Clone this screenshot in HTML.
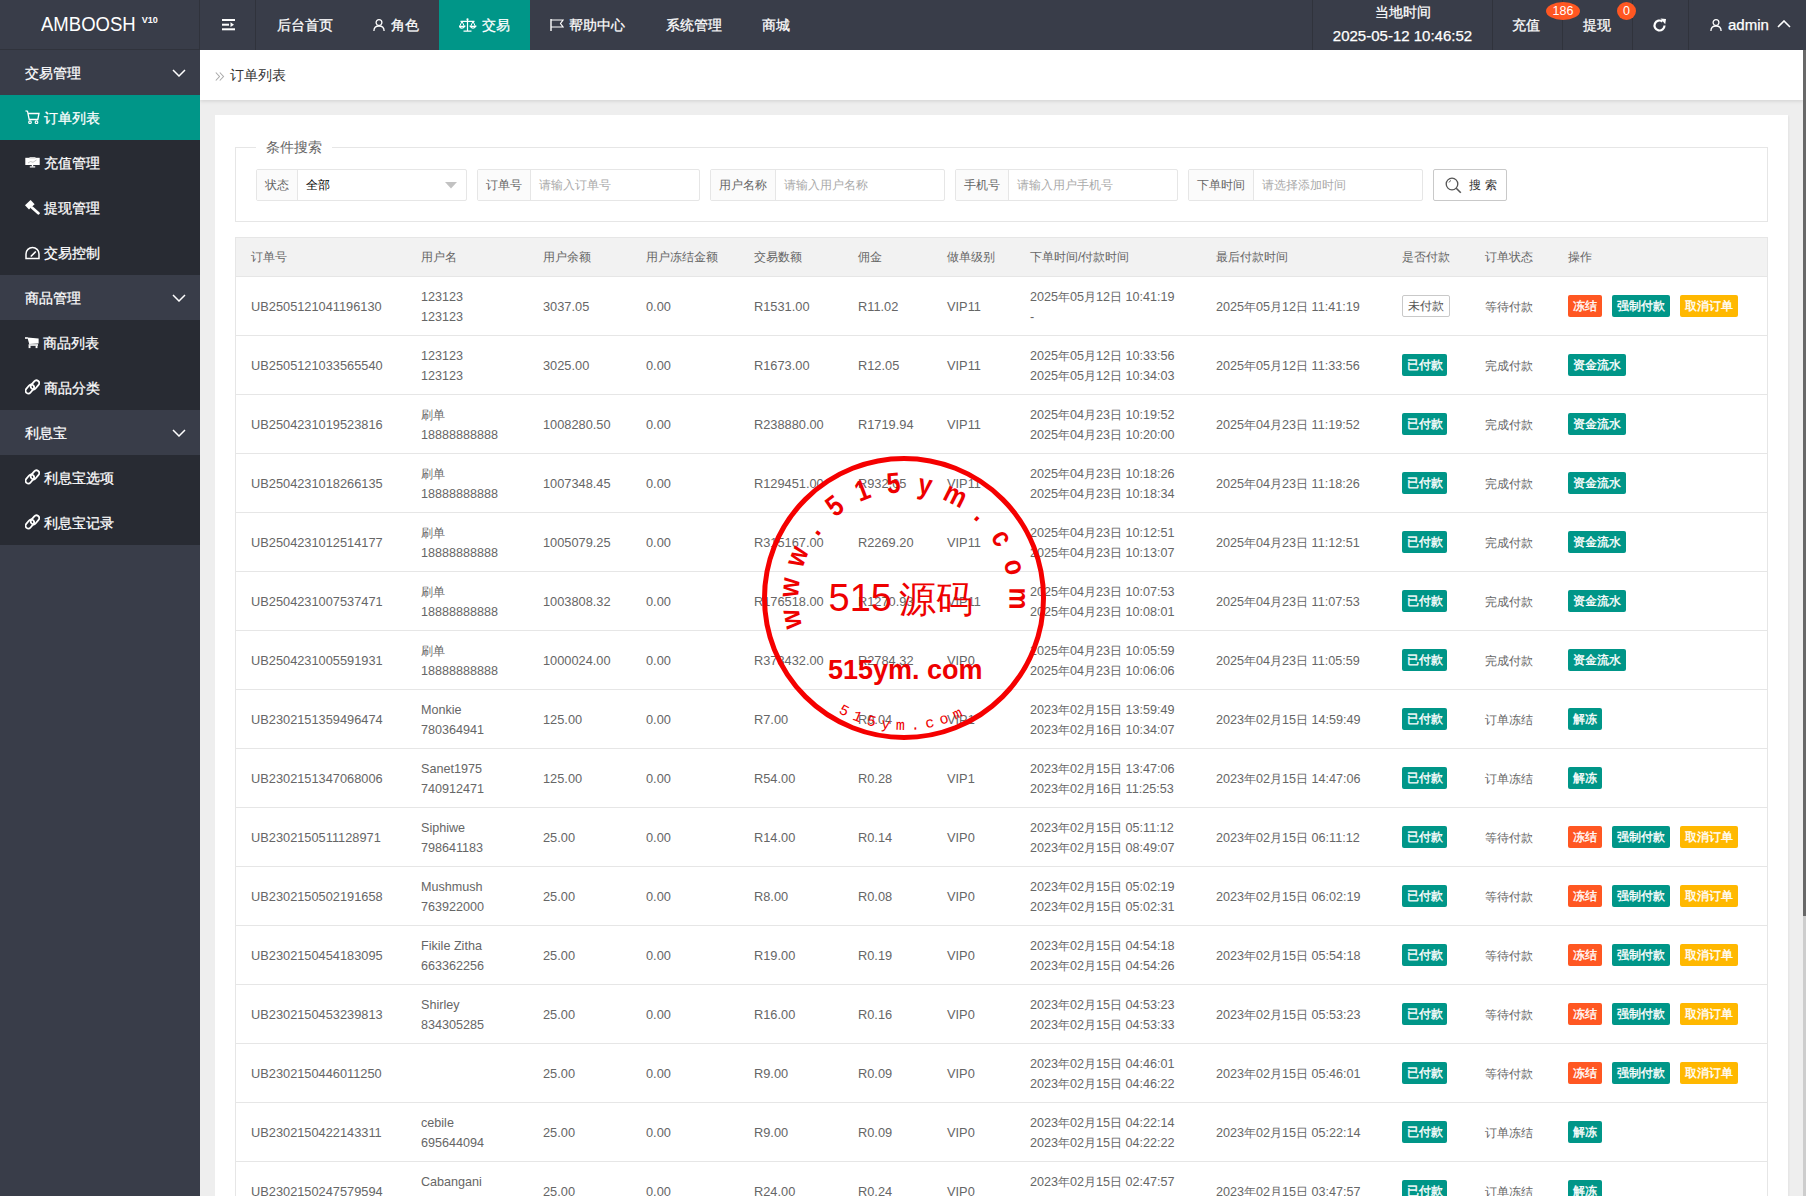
<!DOCTYPE html>
<html><head><meta charset="utf-8">
<style>
*{margin:0;padding:0;box-sizing:border-box}
html,body{width:1806px;height:1196px;overflow:hidden;background:#eee;font-family:"Liberation Sans",sans-serif;color:#666;font-size:12px}
.hdr{position:absolute;left:0;top:0;width:1806px;height:50px;background:#393D49;color:#fff;font-size:14px}
.logo{position:absolute;left:0;top:0;width:200px;height:50px;border-right:1px solid #30333c;border-bottom:1px solid #30333c}
.logo .t{position:absolute;left:41px;top:13px;font-size:19.5px;color:#fff;line-height:22px;transform:scaleX(0.95);transform-origin:0 0;white-space:nowrap}
.logo sup{font-size:9.5px;font-weight:bold;position:absolute;left:106px;top:-4px}
.hamb{position:absolute;left:200px;top:0;width:56px;height:50px;border-right:1px solid #30333c}
.nav{position:absolute;top:0;height:50px;line-height:50px;color:#fff;font-size:14px;white-space:nowrap;-webkit-text-stroke:0.25px #fff}
.nav svg{position:absolute;top:17px}
.navact{background:#009688}
.sep{position:absolute;top:0;width:1px;height:50px;background:#30333c}
.badge{position:absolute;z-index:5;height:18px;line-height:18px;border-radius:50%;background:#FF5722;color:#fff;font-size:12px;text-align:center}
.side{position:absolute;left:0;top:50px;width:200px;height:1146px;background:#393D49}
.side .it{position:absolute;left:0;width:200px;height:45px;line-height:46px;color:#fff;font-size:14px;padding-left:25px;white-space:nowrap;-webkit-text-stroke:0.25px #fff}
.side .ch{background:#282B33;padding-left:44px}
.side .act{background:#009688}
.side .it svg{position:absolute;left:25px;top:15px}
.side .it .arr{position:absolute;left:172px;top:19px}
.main{position:absolute;left:200px;top:50px;width:1603px;height:1146px;background:#eee;overflow:hidden}
.crumb{position:absolute;left:0;top:0;width:1603px;height:50px;background:#fff;box-shadow:0 1px 4px rgba(0,0,0,.13)}
.crumb .t{position:absolute;left:30px;top:17px;font-size:14px;color:#333;line-height:16px}
.crumb .gt{position:absolute;left:14px;top:17px;font-size:14px;color:#999;line-height:16px}
.card{position:absolute;left:15px;top:65px;width:1573px;height:1200px;background:#fff;box-shadow:1px 1px 2px rgba(0,0,0,.05)}
.fs{position:absolute;left:20px;top:32px;width:1533px;height:75px;border:1px solid #e6e6e6}
.lg{position:absolute;left:20px;top:-10px;padding:0 10px;background:#fff;font-size:14px;line-height:18px;color:#666}
.ig{position:absolute;top:21px;height:32px;border:1px solid #e6e6e6;border-radius:2px;background:#fff}
.ig .lb{position:absolute;left:0;top:0;height:30px;line-height:30px;background:#FBFBFB;border-right:1px solid #e6e6e6;padding:0 8px;color:#666;font-size:12px}
.ig .ph{position:absolute;top:0;height:30px;line-height:30px;color:#aaa;font-size:12px}
.sbtn{position:absolute;top:21px;height:32px;width:74px;border:1px solid #C9C9C9;border-radius:2px;background:#fff;color:#333;font-size:12px;line-height:30px}
.tbl{position:absolute;left:20px;top:122px;width:1533px;height:1100px;border-left:1px solid #e6e6e6;border-right:1px solid #e6e6e6;border-top:1px solid #e6e6e6}
.th{position:absolute;left:0;width:1531px;height:39px;background:#F2F2F2;border-bottom:1px solid #e6e6e6}
.th .c{position:absolute;top:0;line-height:39px;color:#666;font-size:12px;white-space:nowrap}
.tr{position:absolute;left:0;width:1531px;height:59px;border-bottom:1px solid #e6e6e6}
.tr .c{position:absolute;top:1px;height:58px;line-height:58px;white-space:nowrap;color:#666;font-size:12.8px}
.tr .c.b{top:-1px}
.cj{font-style:normal;font-size:12px}
.dt{font-size:12.6px}
.l2{position:absolute;top:9px;line-height:20px;white-space:nowrap}
.l2 span{display:block}
.tag{display:inline-block;vertical-align:middle;height:22px;line-height:20px;width:48px;text-align:center;border:1px solid #C9C9C9;border-radius:2px;color:#555;font-size:12px;background:#fff}
.btn{display:inline-block;vertical-align:middle;height:22px;line-height:23px;width:58px;text-align:center;border-radius:2px;color:#fff;font-size:12px;-webkit-text-stroke:0.35px #fff}
.ops .btn{margin-right:10px}
.btn,.tag{position:relative;top:0}
.g{background:#009688}.o{background:#FF5722}.y{background:#FFB800}
.sb{position:absolute;left:1803px;top:50px;width:3px;height:1146px;background:#cdcdcd}
.sb i{position:absolute;left:0;top:0;width:3px;height:866px;background:#686868}
.stamp{position:absolute;left:0;top:0}
</style></head><body>
<div class="hdr">
  <div class="logo"><div class="t">AMBOOSH<sup>V10</sup></div></div>
  <div class="hamb">
    <svg style="position:absolute;left:22px;top:19px" width="14" height="12" viewBox="0 0 14 12"><rect x="0" y="0" width="13" height="2" fill="#fff"/><rect x="0" y="4.7" width="7" height="2" fill="#fff"/><rect x="0" y="9.3" width="13" height="2" fill="#fff"/><path d="M8.5 3.3 L12 5.7 L8.5 8.1 Z" fill="#fff"/></svg>
  </div>
  <div class="nav" style="left:256px;width:97px;text-align:center">后台首页</div>
  <div class="nav" style="left:353px;width:86px">
    <svg style="left:20px;top:19px" width="12" height="12" viewBox="0 0 12 12"><circle cx="6" cy="3.6" r="2.9" fill="none" stroke="#fff" stroke-width="1.3"/><path d="M0.9 12 C0.9 8.6 3 7 6 7 C9 7 11.1 8.6 11.1 12" fill="none" stroke="#fff" stroke-width="1.3"/></svg>
    <span style="position:absolute;left:38px">角色</span></div>
  <div class="nav navact" style="left:439px;width:91px">
    <svg style="left:20px;top:18px" width="18" height="14" viewBox="0 0 18 14"><circle cx="8.5" cy="1.3" r="1.1" fill="#fff"/><path d="M8.5 2 V12.6 M4.5 13.2 H12.5 M1.5 3.3 H15.5" fill="none" stroke="#fff" stroke-width="1.2"/><path d="M3 3.3 L0.6 8.5 M3 3.3 L5.4 8.5 M14 3.3 L11.6 8.5 M14 3.3 L16.4 8.5" fill="none" stroke="#fff" stroke-width="1"/><path d="M0.3 8.3 Q3 12 5.7 8.3 Z M11.3 8.3 Q14 12 16.7 8.3 Z" fill="none" stroke="#fff" stroke-width="1.2"/></svg>
    <span style="position:absolute;left:43px">交易</span></div>
  <div class="nav" style="left:530px;width:115px">
    <svg style="left:20px;top:19px" width="14" height="12" viewBox="0 0 14 12"><path d="M1 0 V12" stroke="#fff" stroke-width="1.4"/><path d="M1 1 H13 L10.5 4.5 L13 8 H1" fill="none" stroke="#fff" stroke-width="1.2"/></svg>
    <span style="position:absolute;left:39px">帮助中心</span></div>
  <div class="nav" style="left:645px;width:97px;text-align:center">系统管理</div>
  <div class="nav" style="left:742px;width:67px;text-align:center">商城</div>

  <div class="sep" style="left:1312px"></div>
  <div class="nav" style="left:1313px;width:179px;text-align:center;line-height:18px;top:3px;font-size:14px">当地时间</div>
  <div class="nav" style="left:1313px;width:179px;text-align:center;line-height:18px;top:27px;font-size:15px">2025-05-12 10:46:52</div>
  <div class="sep" style="left:1492px"></div>
  <div class="nav" style="left:1491px;width:70px;text-align:center">充值</div>
  <div class="badge" style="left:1546px;top:2px;width:34px;font-size:12.5px">186</div>
  <div class="sep" style="left:1562px"></div>
  <div class="nav" style="left:1562px;width:70px;text-align:center">提现</div>
  <div class="badge" style="left:1617px;top:2px;width:19px;font-size:12.5px">0</div>
  <div class="sep" style="left:1632px"></div>
  <div class="nav" style="left:1633px;width:56px">
    <svg style="left:19px;top:18px" width="15" height="15" viewBox="0 0 15 15"><path d="M12.5 7.5 A5 5 0 1 1 10.5 3.5" fill="none" stroke="#fff" stroke-width="2.2"/><path d="M8.5 0.5 L14 1 L13.2 6.3 Z" fill="#fff"/></svg>
  </div>
  <div class="sep" style="left:1688px"></div>
  <div class="nav" style="left:1689px;width:113px">
    <svg style="left:21px;top:19px" width="12" height="12" viewBox="0 0 12 12"><circle cx="6" cy="3.6" r="2.9" fill="none" stroke="#fff" stroke-width="1.3"/><path d="M0.9 12 C0.9 8.6 3 7 6 7 C9 7 11.1 8.6 11.1 12" fill="none" stroke="#fff" stroke-width="1.3"/></svg>
    <span style="position:absolute;left:39px;font-size:15px">admin</span>
    <svg style="left:88px;top:20px" width="14" height="8" viewBox="0 0 14 8"><path d="M1 7 L7 1 L13 7" fill="none" stroke="#fff" stroke-width="1.6"/></svg>
  </div>
</div>

<div class="side">
  <div class="it" style="top:0">交易管理<svg class="arr" width="14" height="8" viewBox="0 0 14 8"><path d="M1 1 L7 7 L13 1" fill="none" stroke="#fff" stroke-width="1.5"/></svg></div>
  <div class="it act ch" style="top:45px">
    <svg width="15" height="14" viewBox="0 0 15 14"><path d="M0.5 0.8 L2.5 1.2 L4.2 9.5 H12.8 L14 3.5 H3" fill="none" stroke="#fff" stroke-width="1.3"/><circle cx="5" cy="12.2" r="1.3" fill="none" stroke="#fff" stroke-width="1.2"/><circle cx="11.5" cy="12.2" r="1.3" fill="none" stroke="#fff" stroke-width="1.2"/></svg>订单列表</div>
  <div class="it ch" style="top:90px">
    <svg width="15" height="11" viewBox="0 0 15 11" style="left:25px;top:17px"><rect x="0.3" y="0.8" width="14.4" height="7.2" fill="#fff"/><rect x="4.5" y="0" width="6" height="1.5" fill="#ccc"/><rect x="6.8" y="8" width="1.4" height="1.6" fill="#fff"/><rect x="4.8" y="9.3" width="5.4" height="1.2" fill="#fff"/><path d="M3 6 L5.5 4.5 L8 5.3 L11.5 3" stroke="#aaa" stroke-width="0.7" fill="none"/></svg>充值管理</div>
  <div class="it ch" style="top:135px">
    <svg width="15" height="15" viewBox="0 0 15 15" style="left:25px;top:15px"><path d="M0 5.2 L5.6 0 L9.6 4.2 L4.0 9.4 Z" fill="#fff"/><path d="M7.2 7.8 L13.4 13.2" stroke="#fff" stroke-width="2.8" stroke-linecap="round"/></svg>提现管理</div>
  <div class="it ch" style="top:180px">
    <svg width="16" height="14" viewBox="0 0 16 14" style="left:25px;top:16px"><path d="M1 12.4 V8 A6.5 6.5 0 0 1 14 8 V12.4 Z" fill="none" stroke="#fff" stroke-width="1.5"/><path d="M6.3 10 L10.3 6" stroke="#fff" stroke-width="1.7" stroke-linecap="round"/></svg>交易控制</div>
  <div class="it" style="top:225px">商品管理<svg class="arr" width="14" height="8" viewBox="0 0 14 8"><path d="M1 1 L7 7 L13 1" fill="none" stroke="#fff" stroke-width="1.5"/></svg></div>
  <div class="it ch" style="top:270px;padding-left:43px">
    <svg width="14" height="12" viewBox="0 0 14 12" style="left:25px;top:17px"><path d="M0 1 H2.8" stroke="#fff" stroke-width="1.6"/><path d="M2.4 0.6 L13.6 1.4 L13.6 6.6 L4.2 7 Z" fill="#fff"/><rect x="3.6" y="7.2" width="9.4" height="1.6" fill="#fff"/><rect x="3.6" y="8.5" width="1.9" height="2.6" fill="#fff"/><rect x="10.6" y="8.5" width="1.9" height="2.6" fill="#fff"/></svg>商品列表</div>
  <div class="it ch" style="top:315px">
    <svg width="15" height="16" viewBox="0 0 15 16" style="left:25px;top:14px"><rect x="2" y="5" width="5.6" height="10" rx="2.8" transform="rotate(40 4.8 10)" fill="none" stroke="#fff" stroke-width="1.8"/><rect x="7.2" y="0.8" width="5.6" height="10" rx="2.8" transform="rotate(40 10 5.8)" fill="none" stroke="#fff" stroke-width="1.8"/></svg>商品分类</div>
  <div class="it" style="top:360px">利息宝<svg class="arr" width="14" height="8" viewBox="0 0 14 8"><path d="M1 1 L7 7 L13 1" fill="none" stroke="#fff" stroke-width="1.5"/></svg></div>
  <div class="it ch" style="top:405px">
    <svg width="15" height="16" viewBox="0 0 15 16" style="left:25px;top:14px"><rect x="2" y="5" width="5.6" height="10" rx="2.8" transform="rotate(40 4.8 10)" fill="none" stroke="#fff" stroke-width="1.8"/><rect x="7.2" y="0.8" width="5.6" height="10" rx="2.8" transform="rotate(40 10 5.8)" fill="none" stroke="#fff" stroke-width="1.8"/></svg>利息宝选项</div>
  <div class="it ch" style="top:450px">
    <svg width="15" height="16" viewBox="0 0 15 16" style="left:25px;top:14px"><rect x="2" y="5" width="5.6" height="10" rx="2.8" transform="rotate(40 4.8 10)" fill="none" stroke="#fff" stroke-width="1.8"/><rect x="7.2" y="0.8" width="5.6" height="10" rx="2.8" transform="rotate(40 10 5.8)" fill="none" stroke="#fff" stroke-width="1.8"/></svg>利息宝记录</div>
</div>

<div class="main">
  <div class="crumb"><svg style="position:absolute;left:15px;top:22px" width="10" height="9" viewBox="0 0 10 9"><path d="M0.8 0.5 L4.5 4.5 L0.8 8.5 M4.8 0.5 L8.5 4.5 L4.8 8.5" fill="none" stroke="#aaa" stroke-width="1.1"/></svg><span class="t">订单列表</span></div>
  <div class="card">
    <div class="fs">
      <div class="lg">条件搜索</div>
      <div class="ig" style="left:20px;width:211px"><div class="lb">状态</div><div class="ph" style="left:49px;color:#000">全部</div>
        <svg style="position:absolute;left:188px;top:12px" width="12" height="7" viewBox="0 0 12 7"><path d="M0 0 H12 L6 6.5 Z" fill="#c2c2c2"/></svg></div>
      <div class="ig" style="left:241px;width:223px"><div class="lb">订单号</div><div class="ph" style="left:61px">请输入订单号</div></div>
      <div class="ig" style="left:474px;width:235px"><div class="lb">用户名称</div><div class="ph" style="left:73px">请输入用户名称</div></div>
      <div class="ig" style="left:719px;width:223px"><div class="lb">手机号</div><div class="ph" style="left:61px">请输入用户手机号</div></div>
      <div class="ig" style="left:952px;width:235px"><div class="lb">下单时间</div><div class="ph" style="left:73px">请选择添加时间</div></div>
      <div class="sbtn" style="left:1197px">
        <svg style="position:absolute;left:11px;top:6.5px" width="17" height="17" viewBox="0 0 17 17"><circle cx="7" cy="7" r="5.8" fill="none" stroke="#555" stroke-width="1.3"/><path d="M11.2 11.2 L15.8 15.8" stroke="#555" stroke-width="1.6"/><path d="M4 5.5 A3.5 3.5 0 0 1 6 3.5" fill="none" stroke="#555" stroke-width="0.9"/></svg>
        <span style="position:absolute;left:35px;letter-spacing:4px">搜索</span></div>
    </div>
    <div class="tbl">
<div class="th" style="top:0">
<span class="c" style="left:15px">订单号</span>
<span class="c" style="left:185px">用户名</span>
<span class="c" style="left:307px">用户余额</span>
<span class="c" style="left:410px">用户冻结金额</span>
<span class="c" style="left:518px">交易数额</span>
<span class="c" style="left:622px">佣金</span>
<span class="c" style="left:711px">做单级别</span>
<span class="c" style="left:794px">下单时间/付款时间</span>
<span class="c" style="left:980px">最后付款时间</span>
<span class="c" style="left:1166px">是否付款</span>
<span class="c" style="left:1249px">订单状态</span>
<span class="c" style="left:1332px">操作</span>
</div>
<div class="tr" style="top:39px">
<div class="c" style="left:15px">UB2505121041196130</div>
<div class="c" style="left:185px"><div class="l2"><span><span class="dt">123123</span></span><span><span class="dt">123123</span></span></div></div>
<div class="c" style="left:307px">3037.05</div>
<div class="c" style="left:410px">0.00</div>
<div class="c" style="left:518px">R1531.00</div>
<div class="c" style="left:622px">R11.02</div>
<div class="c" style="left:711px">VIP11</div>
<div class="c" style="left:794px"><div class="l2"><span><span class="dt">2025<i class="cj">年</i>05<i class="cj">月</i>12<i class="cj">日</i> 10:41:19</span></span><span><span class="dt">-</span></span></div></div>
<div class="c" style="left:980px"><span class="dt">2025<i class="cj">年</i>05<i class="cj">月</i>12<i class="cj">日</i> 11:41:19</span></div>
<div class="c b" style="left:1166px"><span class="tag">未付款</span></div>
<div class="c" style="left:1249px"><span class="dt"><i class="cj">等待付款</i></span></div>
<div class="c b ops" style="left:1332px"><span class="btn o" style="width:34px">冻结</span><span class="btn g">强制付款</span><span class="btn y">取消订单</span></div>
</div>
<div class="tr" style="top:98px">
<div class="c" style="left:15px">UB2505121033565540</div>
<div class="c" style="left:185px"><div class="l2"><span><span class="dt">123123</span></span><span><span class="dt">123123</span></span></div></div>
<div class="c" style="left:307px">3025.00</div>
<div class="c" style="left:410px">0.00</div>
<div class="c" style="left:518px">R1673.00</div>
<div class="c" style="left:622px">R12.05</div>
<div class="c" style="left:711px">VIP11</div>
<div class="c" style="left:794px"><div class="l2"><span><span class="dt">2025<i class="cj">年</i>05<i class="cj">月</i>12<i class="cj">日</i> 10:33:56</span></span><span><span class="dt">2025<i class="cj">年</i>05<i class="cj">月</i>12<i class="cj">日</i> 10:34:03</span></span></div></div>
<div class="c" style="left:980px"><span class="dt">2025<i class="cj">年</i>05<i class="cj">月</i>12<i class="cj">日</i> 11:33:56</span></div>
<div class="c b" style="left:1166px"><span class="btn g" style="width:45px">已付款</span></div>
<div class="c" style="left:1249px"><span class="dt"><i class="cj">完成付款</i></span></div>
<div class="c b ops" style="left:1332px"><span class="btn g">资金流水</span></div>
</div>
<div class="tr" style="top:157px">
<div class="c" style="left:15px">UB2504231019523816</div>
<div class="c" style="left:185px"><div class="l2"><span><span class="dt"><i class="cj">刷单</i></span></span><span><span class="dt">18888888888</span></span></div></div>
<div class="c" style="left:307px">1008280.50</div>
<div class="c" style="left:410px">0.00</div>
<div class="c" style="left:518px">R238880.00</div>
<div class="c" style="left:622px">R1719.94</div>
<div class="c" style="left:711px">VIP11</div>
<div class="c" style="left:794px"><div class="l2"><span><span class="dt">2025<i class="cj">年</i>04<i class="cj">月</i>23<i class="cj">日</i> 10:19:52</span></span><span><span class="dt">2025<i class="cj">年</i>04<i class="cj">月</i>23<i class="cj">日</i> 10:20:00</span></span></div></div>
<div class="c" style="left:980px"><span class="dt">2025<i class="cj">年</i>04<i class="cj">月</i>23<i class="cj">日</i> 11:19:52</span></div>
<div class="c b" style="left:1166px"><span class="btn g" style="width:45px">已付款</span></div>
<div class="c" style="left:1249px"><span class="dt"><i class="cj">完成付款</i></span></div>
<div class="c b ops" style="left:1332px"><span class="btn g">资金流水</span></div>
</div>
<div class="tr" style="top:216px">
<div class="c" style="left:15px">UB2504231018266135</div>
<div class="c" style="left:185px"><div class="l2"><span><span class="dt"><i class="cj">刷单</i></span></span><span><span class="dt">18888888888</span></span></div></div>
<div class="c" style="left:307px">1007348.45</div>
<div class="c" style="left:410px">0.00</div>
<div class="c" style="left:518px">R129451.00</div>
<div class="c" style="left:622px">R932.05</div>
<div class="c" style="left:711px">VIP11</div>
<div class="c" style="left:794px"><div class="l2"><span><span class="dt">2025<i class="cj">年</i>04<i class="cj">月</i>23<i class="cj">日</i> 10:18:26</span></span><span><span class="dt">2025<i class="cj">年</i>04<i class="cj">月</i>23<i class="cj">日</i> 10:18:34</span></span></div></div>
<div class="c" style="left:980px"><span class="dt">2025<i class="cj">年</i>04<i class="cj">月</i>23<i class="cj">日</i> 11:18:26</span></div>
<div class="c b" style="left:1166px"><span class="btn g" style="width:45px">已付款</span></div>
<div class="c" style="left:1249px"><span class="dt"><i class="cj">完成付款</i></span></div>
<div class="c b ops" style="left:1332px"><span class="btn g">资金流水</span></div>
</div>
<div class="tr" style="top:275px">
<div class="c" style="left:15px">UB2504231012514177</div>
<div class="c" style="left:185px"><div class="l2"><span><span class="dt"><i class="cj">刷单</i></span></span><span><span class="dt">18888888888</span></span></div></div>
<div class="c" style="left:307px">1005079.25</div>
<div class="c" style="left:410px">0.00</div>
<div class="c" style="left:518px">R315167.00</div>
<div class="c" style="left:622px">R2269.20</div>
<div class="c" style="left:711px">VIP11</div>
<div class="c" style="left:794px"><div class="l2"><span><span class="dt">2025<i class="cj">年</i>04<i class="cj">月</i>23<i class="cj">日</i> 10:12:51</span></span><span><span class="dt">2025<i class="cj">年</i>04<i class="cj">月</i>23<i class="cj">日</i> 10:13:07</span></span></div></div>
<div class="c" style="left:980px"><span class="dt">2025<i class="cj">年</i>04<i class="cj">月</i>23<i class="cj">日</i> 11:12:51</span></div>
<div class="c b" style="left:1166px"><span class="btn g" style="width:45px">已付款</span></div>
<div class="c" style="left:1249px"><span class="dt"><i class="cj">完成付款</i></span></div>
<div class="c b ops" style="left:1332px"><span class="btn g">资金流水</span></div>
</div>
<div class="tr" style="top:334px">
<div class="c" style="left:15px">UB2504231007537471</div>
<div class="c" style="left:185px"><div class="l2"><span><span class="dt"><i class="cj">刷单</i></span></span><span><span class="dt">18888888888</span></span></div></div>
<div class="c" style="left:307px">1003808.32</div>
<div class="c" style="left:410px">0.00</div>
<div class="c" style="left:518px">R176518.00</div>
<div class="c" style="left:622px">R1270.93</div>
<div class="c" style="left:711px">VIP11</div>
<div class="c" style="left:794px"><div class="l2"><span><span class="dt">2025<i class="cj">年</i>04<i class="cj">月</i>23<i class="cj">日</i> 10:07:53</span></span><span><span class="dt">2025<i class="cj">年</i>04<i class="cj">月</i>23<i class="cj">日</i> 10:08:01</span></span></div></div>
<div class="c" style="left:980px"><span class="dt">2025<i class="cj">年</i>04<i class="cj">月</i>23<i class="cj">日</i> 11:07:53</span></div>
<div class="c b" style="left:1166px"><span class="btn g" style="width:45px">已付款</span></div>
<div class="c" style="left:1249px"><span class="dt"><i class="cj">完成付款</i></span></div>
<div class="c b ops" style="left:1332px"><span class="btn g">资金流水</span></div>
</div>
<div class="tr" style="top:393px">
<div class="c" style="left:15px">UB2504231005591931</div>
<div class="c" style="left:185px"><div class="l2"><span><span class="dt"><i class="cj">刷单</i></span></span><span><span class="dt">18888888888</span></span></div></div>
<div class="c" style="left:307px">1000024.00</div>
<div class="c" style="left:410px">0.00</div>
<div class="c" style="left:518px">R373432.00</div>
<div class="c" style="left:622px">R2784.32</div>
<div class="c" style="left:711px">VIP0</div>
<div class="c" style="left:794px"><div class="l2"><span><span class="dt">2025<i class="cj">年</i>04<i class="cj">月</i>23<i class="cj">日</i> 10:05:59</span></span><span><span class="dt">2025<i class="cj">年</i>04<i class="cj">月</i>23<i class="cj">日</i> 10:06:06</span></span></div></div>
<div class="c" style="left:980px"><span class="dt">2025<i class="cj">年</i>04<i class="cj">月</i>23<i class="cj">日</i> 11:05:59</span></div>
<div class="c b" style="left:1166px"><span class="btn g" style="width:45px">已付款</span></div>
<div class="c" style="left:1249px"><span class="dt"><i class="cj">完成付款</i></span></div>
<div class="c b ops" style="left:1332px"><span class="btn g">资金流水</span></div>
</div>
<div class="tr" style="top:452px">
<div class="c" style="left:15px">UB2302151359496474</div>
<div class="c" style="left:185px"><div class="l2"><span><span class="dt">Monkie</span></span><span><span class="dt">780364941</span></span></div></div>
<div class="c" style="left:307px">125.00</div>
<div class="c" style="left:410px">0.00</div>
<div class="c" style="left:518px">R7.00</div>
<div class="c" style="left:622px">R0.04</div>
<div class="c" style="left:711px">VIP1</div>
<div class="c" style="left:794px"><div class="l2"><span><span class="dt">2023<i class="cj">年</i>02<i class="cj">月</i>15<i class="cj">日</i> 13:59:49</span></span><span><span class="dt">2023<i class="cj">年</i>02<i class="cj">月</i>16<i class="cj">日</i> 10:34:07</span></span></div></div>
<div class="c" style="left:980px"><span class="dt">2023<i class="cj">年</i>02<i class="cj">月</i>15<i class="cj">日</i> 14:59:49</span></div>
<div class="c b" style="left:1166px"><span class="btn g" style="width:45px">已付款</span></div>
<div class="c" style="left:1249px"><span class="dt"><i class="cj">订单冻结</i></span></div>
<div class="c b ops" style="left:1332px"><span class="btn g" style="width:34px">解冻</span></div>
</div>
<div class="tr" style="top:511px">
<div class="c" style="left:15px">UB2302151347068006</div>
<div class="c" style="left:185px"><div class="l2"><span><span class="dt">Sanet1975</span></span><span><span class="dt">740912471</span></span></div></div>
<div class="c" style="left:307px">125.00</div>
<div class="c" style="left:410px">0.00</div>
<div class="c" style="left:518px">R54.00</div>
<div class="c" style="left:622px">R0.28</div>
<div class="c" style="left:711px">VIP1</div>
<div class="c" style="left:794px"><div class="l2"><span><span class="dt">2023<i class="cj">年</i>02<i class="cj">月</i>15<i class="cj">日</i> 13:47:06</span></span><span><span class="dt">2023<i class="cj">年</i>02<i class="cj">月</i>16<i class="cj">日</i> 11:25:53</span></span></div></div>
<div class="c" style="left:980px"><span class="dt">2023<i class="cj">年</i>02<i class="cj">月</i>15<i class="cj">日</i> 14:47:06</span></div>
<div class="c b" style="left:1166px"><span class="btn g" style="width:45px">已付款</span></div>
<div class="c" style="left:1249px"><span class="dt"><i class="cj">订单冻结</i></span></div>
<div class="c b ops" style="left:1332px"><span class="btn g" style="width:34px">解冻</span></div>
</div>
<div class="tr" style="top:570px">
<div class="c" style="left:15px">UB2302150511128971</div>
<div class="c" style="left:185px"><div class="l2"><span><span class="dt">Siphiwe</span></span><span><span class="dt">798641183</span></span></div></div>
<div class="c" style="left:307px">25.00</div>
<div class="c" style="left:410px">0.00</div>
<div class="c" style="left:518px">R14.00</div>
<div class="c" style="left:622px">R0.14</div>
<div class="c" style="left:711px">VIP0</div>
<div class="c" style="left:794px"><div class="l2"><span><span class="dt">2023<i class="cj">年</i>02<i class="cj">月</i>15<i class="cj">日</i> 05:11:12</span></span><span><span class="dt">2023<i class="cj">年</i>02<i class="cj">月</i>15<i class="cj">日</i> 08:49:07</span></span></div></div>
<div class="c" style="left:980px"><span class="dt">2023<i class="cj">年</i>02<i class="cj">月</i>15<i class="cj">日</i> 06:11:12</span></div>
<div class="c b" style="left:1166px"><span class="btn g" style="width:45px">已付款</span></div>
<div class="c" style="left:1249px"><span class="dt"><i class="cj">等待付款</i></span></div>
<div class="c b ops" style="left:1332px"><span class="btn o" style="width:34px">冻结</span><span class="btn g">强制付款</span><span class="btn y">取消订单</span></div>
</div>
<div class="tr" style="top:629px">
<div class="c" style="left:15px">UB2302150502191658</div>
<div class="c" style="left:185px"><div class="l2"><span><span class="dt">Mushmush</span></span><span><span class="dt">763922000</span></span></div></div>
<div class="c" style="left:307px">25.00</div>
<div class="c" style="left:410px">0.00</div>
<div class="c" style="left:518px">R8.00</div>
<div class="c" style="left:622px">R0.08</div>
<div class="c" style="left:711px">VIP0</div>
<div class="c" style="left:794px"><div class="l2"><span><span class="dt">2023<i class="cj">年</i>02<i class="cj">月</i>15<i class="cj">日</i> 05:02:19</span></span><span><span class="dt">2023<i class="cj">年</i>02<i class="cj">月</i>15<i class="cj">日</i> 05:02:31</span></span></div></div>
<div class="c" style="left:980px"><span class="dt">2023<i class="cj">年</i>02<i class="cj">月</i>15<i class="cj">日</i> 06:02:19</span></div>
<div class="c b" style="left:1166px"><span class="btn g" style="width:45px">已付款</span></div>
<div class="c" style="left:1249px"><span class="dt"><i class="cj">等待付款</i></span></div>
<div class="c b ops" style="left:1332px"><span class="btn o" style="width:34px">冻结</span><span class="btn g">强制付款</span><span class="btn y">取消订单</span></div>
</div>
<div class="tr" style="top:688px">
<div class="c" style="left:15px">UB2302150454183095</div>
<div class="c" style="left:185px"><div class="l2"><span><span class="dt">Fikile Zitha</span></span><span><span class="dt">663362256</span></span></div></div>
<div class="c" style="left:307px">25.00</div>
<div class="c" style="left:410px">0.00</div>
<div class="c" style="left:518px">R19.00</div>
<div class="c" style="left:622px">R0.19</div>
<div class="c" style="left:711px">VIP0</div>
<div class="c" style="left:794px"><div class="l2"><span><span class="dt">2023<i class="cj">年</i>02<i class="cj">月</i>15<i class="cj">日</i> 04:54:18</span></span><span><span class="dt">2023<i class="cj">年</i>02<i class="cj">月</i>15<i class="cj">日</i> 04:54:26</span></span></div></div>
<div class="c" style="left:980px"><span class="dt">2023<i class="cj">年</i>02<i class="cj">月</i>15<i class="cj">日</i> 05:54:18</span></div>
<div class="c b" style="left:1166px"><span class="btn g" style="width:45px">已付款</span></div>
<div class="c" style="left:1249px"><span class="dt"><i class="cj">等待付款</i></span></div>
<div class="c b ops" style="left:1332px"><span class="btn o" style="width:34px">冻结</span><span class="btn g">强制付款</span><span class="btn y">取消订单</span></div>
</div>
<div class="tr" style="top:747px">
<div class="c" style="left:15px">UB2302150453239813</div>
<div class="c" style="left:185px"><div class="l2"><span><span class="dt">Shirley</span></span><span><span class="dt">834305285</span></span></div></div>
<div class="c" style="left:307px">25.00</div>
<div class="c" style="left:410px">0.00</div>
<div class="c" style="left:518px">R16.00</div>
<div class="c" style="left:622px">R0.16</div>
<div class="c" style="left:711px">VIP0</div>
<div class="c" style="left:794px"><div class="l2"><span><span class="dt">2023<i class="cj">年</i>02<i class="cj">月</i>15<i class="cj">日</i> 04:53:23</span></span><span><span class="dt">2023<i class="cj">年</i>02<i class="cj">月</i>15<i class="cj">日</i> 04:53:33</span></span></div></div>
<div class="c" style="left:980px"><span class="dt">2023<i class="cj">年</i>02<i class="cj">月</i>15<i class="cj">日</i> 05:53:23</span></div>
<div class="c b" style="left:1166px"><span class="btn g" style="width:45px">已付款</span></div>
<div class="c" style="left:1249px"><span class="dt"><i class="cj">等待付款</i></span></div>
<div class="c b ops" style="left:1332px"><span class="btn o" style="width:34px">冻结</span><span class="btn g">强制付款</span><span class="btn y">取消订单</span></div>
</div>
<div class="tr" style="top:806px">
<div class="c" style="left:15px">UB2302150446011250</div>
<div class="c" style="left:185px"></div>
<div class="c" style="left:307px">25.00</div>
<div class="c" style="left:410px">0.00</div>
<div class="c" style="left:518px">R9.00</div>
<div class="c" style="left:622px">R0.09</div>
<div class="c" style="left:711px">VIP0</div>
<div class="c" style="left:794px"><div class="l2"><span><span class="dt">2023<i class="cj">年</i>02<i class="cj">月</i>15<i class="cj">日</i> 04:46:01</span></span><span><span class="dt">2023<i class="cj">年</i>02<i class="cj">月</i>15<i class="cj">日</i> 04:46:22</span></span></div></div>
<div class="c" style="left:980px"><span class="dt">2023<i class="cj">年</i>02<i class="cj">月</i>15<i class="cj">日</i> 05:46:01</span></div>
<div class="c b" style="left:1166px"><span class="btn g" style="width:45px">已付款</span></div>
<div class="c" style="left:1249px"><span class="dt"><i class="cj">等待付款</i></span></div>
<div class="c b ops" style="left:1332px"><span class="btn o" style="width:34px">冻结</span><span class="btn g">强制付款</span><span class="btn y">取消订单</span></div>
</div>
<div class="tr" style="top:865px">
<div class="c" style="left:15px">UB2302150422143311</div>
<div class="c" style="left:185px"><div class="l2"><span><span class="dt">cebile</span></span><span><span class="dt">695644094</span></span></div></div>
<div class="c" style="left:307px">25.00</div>
<div class="c" style="left:410px">0.00</div>
<div class="c" style="left:518px">R9.00</div>
<div class="c" style="left:622px">R0.09</div>
<div class="c" style="left:711px">VIP0</div>
<div class="c" style="left:794px"><div class="l2"><span><span class="dt">2023<i class="cj">年</i>02<i class="cj">月</i>15<i class="cj">日</i> 04:22:14</span></span><span><span class="dt">2023<i class="cj">年</i>02<i class="cj">月</i>15<i class="cj">日</i> 04:22:22</span></span></div></div>
<div class="c" style="left:980px"><span class="dt">2023<i class="cj">年</i>02<i class="cj">月</i>15<i class="cj">日</i> 05:22:14</span></div>
<div class="c b" style="left:1166px"><span class="btn g" style="width:45px">已付款</span></div>
<div class="c" style="left:1249px"><span class="dt"><i class="cj">订单冻结</i></span></div>
<div class="c b ops" style="left:1332px"><span class="btn g" style="width:34px">解冻</span></div>
</div>
<div class="tr" style="top:924px">
<div class="c" style="left:15px">UB2302150247579594</div>
<div class="c" style="left:185px"><div class="l2"><span><span class="dt">Cabangani</span></span><span><span class="dt">690000000</span></span></div></div>
<div class="c" style="left:307px">25.00</div>
<div class="c" style="left:410px">0.00</div>
<div class="c" style="left:518px">R24.00</div>
<div class="c" style="left:622px">R0.24</div>
<div class="c" style="left:711px">VIP0</div>
<div class="c" style="left:794px"><div class="l2"><span><span class="dt">2023<i class="cj">年</i>02<i class="cj">月</i>15<i class="cj">日</i> 02:47:57</span></span><span><span class="dt">2023<i class="cj">年</i>02<i class="cj">月</i>15<i class="cj">日</i> 02:48:03</span></span></div></div>
<div class="c" style="left:980px"><span class="dt">2023<i class="cj">年</i>02<i class="cj">月</i>15<i class="cj">日</i> 03:47:57</span></div>
<div class="c b" style="left:1166px"><span class="btn g" style="width:45px">已付款</span></div>
<div class="c" style="left:1249px"><span class="dt"><i class="cj">订单冻结</i></span></div>
<div class="c b ops" style="left:1332px"><span class="btn g" style="width:34px">解冻</span></div>
</div>
    </div>
  </div>
</div>
<div class="sb"><i></i></div>

<svg class="stamp" width="1806" height="1196" viewBox="0 0 1806 1196" style="position:absolute;left:0;top:0">
  <style>.st1{font-family:"Liberation Sans",sans-serif;font-weight:bold;font-size:29px;fill:#EE0000;text-anchor:middle}
  .st2{font-family:"Liberation Mono",monospace;font-size:15px;fill:#EE0000;text-anchor:middle}
  .st3{font-family:"Liberation Sans",sans-serif;font-weight:bold;fill:#EE0000}</style>
  <circle cx="904" cy="598" r="139.5" fill="none" stroke="#F50000" stroke-width="5"/>
<text transform="rotate(-100.6 904 598) translate(904 492.5) scale(0.85 1)" class="st1">w</text>
<text transform="rotate(-84.7 904 598) translate(904 492.5) scale(0.85 1)" class="st1">w</text>
<text transform="rotate(-68.8 904 598) translate(904 492.5) scale(0.85 1)" class="st1">w</text>
<text transform="rotate(-52.9 904 598) translate(904 492.5) scale(0.85 1)" class="st1">.</text>
<text transform="rotate(-37.0 904 598) translate(904 492.5) scale(0.85 1)" class="st1">5</text>
<text transform="rotate(-21.1 904 598) translate(904 492.5) scale(0.85 1)" class="st1">1</text>
<text transform="rotate(-5.2 904 598) translate(904 492.5) scale(0.85 1)" class="st1">5</text>
<text transform="rotate(10.7 904 598) translate(904 492.5) scale(0.85 1)" class="st1">y</text>
<text transform="rotate(26.6 904 598) translate(904 492.5) scale(0.85 1)" class="st1">m</text>
<text transform="rotate(42.5 904 598) translate(904 492.5) scale(0.85 1)" class="st1">.</text>
<text transform="rotate(58.4 904 598) translate(904 492.5) scale(0.85 1)" class="st1">c</text>
<text transform="rotate(74.3 904 598) translate(904 492.5) scale(0.85 1)" class="st1">o</text>
<text transform="rotate(90.2 904 598) translate(904 492.5) scale(0.85 1)" class="st1">m</text>
<text transform="rotate(28.0 904 598) translate(904 730.0)" class="st2">5</text>
<text transform="rotate(21.4 904 598) translate(904 730.0)" class="st2">1</text>
<text transform="rotate(14.8 904 598) translate(904 730.0)" class="st2">5</text>
<text transform="rotate(8.2 904 598) translate(904 730.0)" class="st2">y</text>
<text transform="rotate(1.6 904 598) translate(904 730.0)" class="st2">m</text>
<text transform="rotate(-5.0 904 598) translate(904 730.0)" class="st2">.</text>
<text transform="rotate(-11.6 904 598) translate(904 730.0)" class="st2">c</text>
<text transform="rotate(-18.2 904 598) translate(904 730.0)" class="st2">o</text>
<text transform="rotate(-24.8 904 598) translate(904 730.0)" class="st2">m</text>
  <text x="828.5" y="611" class="st3" style="font-size:38px;font-weight:normal">515</text>
  <text x="899" y="612" class="st3" style="font-size:37px;font-weight:normal">源码</text>
  <text x="828" y="678.5" class="st3" style="font-size:27px" xml:space="preserve">515ym. com</text>
</svg>
</body></html>
